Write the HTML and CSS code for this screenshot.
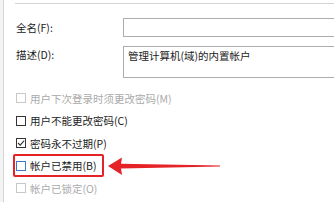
FILE: index.html
```html
<!DOCTYPE html>
<html lang="zh-CN">
<head>
    <meta charset="UTF-8">
    <meta name="viewport" content="width=device-width, initial-scale=1.0">
    <title>Administrator 属性</title>
    <link rel="stylesheet" href="styles.css">
</head>
<body>

    <div class="frame">
        <div class="rule"></div>

        <div class="field">
            <span class="label">全名(F):</span>
            <div class="box"></div>
        </div>
        <div class="field field-top">
            <span class="label">描述(D):</span>
            <div class="box box-tall">管理计算机(域)的内置帐户</div>
        </div>

        <div class="options">
            <div class="opt disabled"><span class="check"></span>用户下次登录时须更改密码(M)</div>
            <div class="opt"><span class="check"></span>用户不能更改密码(C)</div>
            <div class="opt">
                <span class="check">
                    <svg width="10" height="10" viewBox="0 0 10 10"><path d="M2 5 L4.2 7.2 L8.2 2.6" fill="none" stroke="#333" stroke-width="1.1"/></svg>
                </span>密码永不过期(P)
            </div>
            <div class="opt marked">
                <span class="check hover"></span>帐户已禁用(B)
                <!-- 标注 -->
                <div class="highlight"></div>
                <svg class="arrow" width="120" height="24" viewBox="0 0 120 24">
                    <path d="M1 12 L15 3.5 L14 9.8 L113 11.5 L113 12.5 L14 14.6 L15 21 Z" fill="#e52226"/>
                </svg>
            </div>
            <div class="opt disabled"><span class="check"></span>帐户已锁定(O)</div>
        </div>
    </div>

</body>
</html>
```

FILE: styles.css
```css
html, body {
    margin: 0;
    padding: 0;
    background: #fff;
    overflow: hidden;
}
body {
    width: 334px;
    height: 202px;
    font-family: "Noto Sans CJK SC", "Noto Sans", sans-serif;
    font-size: 10.5px;
    color: #222;
    background: #f3f3f3;
}
.frame {
    margin-left: 3px;
    height: 202px;
    padding-top: 3px;
    box-sizing: border-box;
    border-left: 1px solid #d6d6d6;
    background: #fff;
}
.rule {
    margin-left: 11px;
    height: 1px;
    background: #d4d4d4;
}
.field {
    display: flex;
    align-items: center;
    padding-left: 12px;
    margin-top: 14px;
}
.field-top {
    align-items: flex-start;
    margin-top: 9px;
}
.label {
    width: 107px;
    flex-shrink: 0;
    line-height: 19px;
}
.field-top .label {
    line-height: 18px;
}
.box {
    flex: 1;
    height: 19px;
    margin-right: -4px;
    border: 1px solid #adadad;
    box-sizing: border-box;
    padding: 0 4px;
    line-height: 17px;
}
.box-tall {
    height: 32px;
}
.options {
    margin-top: 9px;
    padding-left: 12px;
}
.opt {
    position: relative;
    display: flex;
    align-items: center;
    height: 22.5px;
}
.check {
    width: 10px;
    height: 10px;
    border: 1px solid #333;
    box-sizing: border-box;
    margin-right: 4px;
    display: flex;
}
.check svg {
    margin: -1px;
}
.check.hover {
    border-color: #3d7bc4;
}
.disabled {
    color: #aaa;
}
.disabled .check {
    border-color: #c8c8c8;
}
.highlight {
    position: absolute;
    left: -3px;
    top: -1px;
    width: 91px;
    height: 23px;
    border: 2px solid #e52226;
    border-radius: 2px;
    box-sizing: border-box;
}
.arrow {
    position: absolute;
    left: 91px;
    top: -1px;
}
```
